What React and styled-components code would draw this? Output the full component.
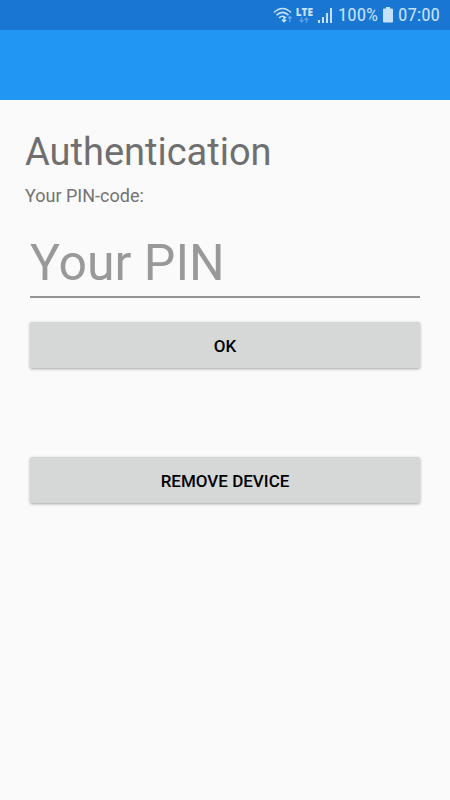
import React from "react";
import styled, { createGlobalStyle } from "styled-components";

const GlobalStyle = createGlobalStyle`
  * { box-sizing: border-box; }
  body { margin: 0; background: #fafafa; font-family: Roboto, "Noto Sans", sans-serif; }
`;

const Screen = styled.div`
  min-height: 100vh;
  display: flex;
  flex-direction: column;
  background: #fafafa;
`;

const StatusBar = styled.div`
  display: flex;
  align-items: center;
  justify-content: flex-end;
  height: 30px;
  padding: 0 10px;
  gap: 4px;
  background: #1976d2;
  color: #c6e2fa;
`;

const StatusIcon = styled.svg`
  display: block;
  flex: none;
`;

const StatusText = styled.span`
  font-family: "Roboto Condensed", Roboto, sans-serif;
  font-size: 19px;
  line-height: 30px;
`;

const Network = styled.div`
  display: flex;
  flex-direction: column;
  align-items: center;
  font-family: "Open Sans", sans-serif;
  font-size: 10px;
  font-weight: 800;
  line-height: 10px;
`;

const AppBar = styled.header`
  height: 70px;
  background: #2196f3;
`;

const Form = styled.form`
  display: flex;
  flex-direction: column;
  padding: 30px 25px;
`;

const Title = styled.h1`
  margin: 0;
  font-size: 38px;
  font-weight: 400;
  line-height: 44px;
  color: #6f6f6f;
`;

const Label = styled.label`
  margin-top: 12px;
  font-size: 18px;
  line-height: 20px;
  color: #737373;
`;

const PinInput = styled.input`
  margin: 24px 5px 0;
  padding: 0;
  height: 68px;
  border: 0;
  border-bottom: 2px solid #949494;
  border-radius: 0;
  outline: 0;
  background: transparent;
  font-family: inherit;
  font-size: 50px;
  color: #333;
  &::placeholder { color: #999; opacity: 1; }
`;

const Actions = styled.div`
  display: flex;
  flex-direction: column;
  gap: 89px;
  margin: 24px 5px 0;
`;

const Button = styled.button`
  height: 46px;
  padding: 1px 0 0;
  border: 0;
  border-radius: 2px;
  background: #d6d8d7;
  box-shadow: 0 1px 3px rgba(0, 0, 0, 0.35);
  font-family: inherit;
  font-size: 17px;
  font-weight: 500;
  color: #000;
`;

export default function App() {
  return (
    <Screen>
      <GlobalStyle />
      <StatusBar>
        <StatusIcon width="20" height="16" viewBox="0 0 20 16" fill="none" stroke="currentColor" strokeWidth="1.6">
          <path d="M2 5.500Q10.500-2.500 19 5.500M4.500 8.200Q10.500 2.500 16.500 8.200M7 11Q10.500 7.500 14 11" />
          <path d="M12 10v5M10 12.700l2 2 2-2" strokeWidth="1.600" />
          <path d="M17.800 15V9.500M16 11.300l1.800-1.800 1.800 1.800" strokeWidth="1.200" opacity="0.5" />
        </StatusIcon>
        <Network>
          LTE
          <StatusIcon width="10" height="6" viewBox="0 0 10 6" fill="none" stroke="currentColor" strokeWidth="1.400" opacity="0.35">
            <path d="M2.500 0v5M.5 3l2 2 2-2M7.500 6V1M5.500 3l2-2 2 2" />
          </StatusIcon>
        </Network>
        <StatusIcon width="17" height="16" viewBox="0 0 17 16" fill="currentColor">
          <path d="M1 13h2v3H1zM5 10h2v6H5zM9 6h2v10H9zM13 1h2v15h-2z" />
        </StatusIcon>
        <StatusText>100%</StatusText>
        <StatusIcon width="12" height="16" viewBox="0 0 12 16" fill="currentColor">
          <path d="M4 0h4v1.500h2a1 1 0 0 1 1 1v12a1 1 0 0 1-1 1H2a1 1 0 0 1-1-1v-12a1 1 0 0 1 1-1h2z" />
        </StatusIcon>
        <StatusText>07:00</StatusText>
      </StatusBar>
      <AppBar />
      <Form onSubmit={(e) => e.preventDefault()}>
        <Title>Authentication</Title>
        <Label htmlFor="pin">Your PIN-code:</Label>
        <PinInput id="pin" type="password" inputMode="numeric" placeholder="Your PIN" />
        <Actions>
          <Button type="submit">OK</Button>
          <Button type="button">REMOVE DEVICE</Button>
        </Actions>
      </Form>
    </Screen>
  );
}
